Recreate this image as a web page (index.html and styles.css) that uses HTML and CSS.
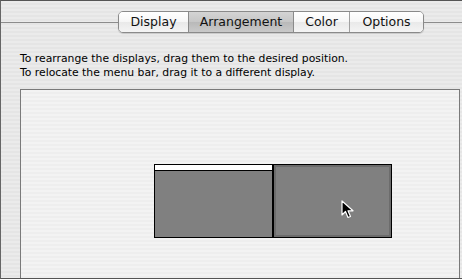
FILE: index.html
```html
<!DOCTYPE html>
<html lang="en">
<head>
  <meta charset="UTF-8">
  <meta name="viewport" content="width=device-width, initial-scale=1.0">
  <link rel="stylesheet" href="styles.css">
  <title>Displays</title>
</head>
<body>
  <div class="window">
    <div class="tabbar">
      <div class="tabs">
        <button class="tab">Display</button>
        <button class="tab active">Arrangement</button>
        <button class="tab">Color</button>
        <button class="tab">Options</button>
      </div>
    </div>

    <p class="hint">
      To rearrange the displays, drag them to the desired position.<br>
      To relocate the menu bar, drag it to a different display.
    </p>

    <div class="arrange">
      <div class="displays">
        <div class="screen main">
          <div class="menubar"></div>
        </div>
        <div class="screen selected">
          <svg class="cursor" width="13" height="19" viewBox="0 0 13 19">
            <path d="M1 1 L1 15 L4.5 11.5 L7 17.5 L9.5 16.5 L7 10.8 L12 10.8 Z" fill="#000" stroke="#fff" stroke-width="1.2" stroke-linejoin="round"/>
          </svg>
        </div>
      </div>
    </div>
  </div>
</body>
</html>
```

FILE: styles.css
```css
body {
  margin: 0;
  padding: 0;
  font-family: 'DejaVu Sans', 'Liberation Sans', sans-serif;
  color: #111;
  background: #e8e8e8;
}
.window {
  width: 462px;
  height: 279px;
  box-sizing: border-box;
  border-top: 1px solid #555;
  border-left: 1px solid #666;
  border-bottom: 1px solid #555;
  overflow: hidden;
  background: repeating-linear-gradient(to bottom, #ebebeb 0, #ebebeb 2px, #e5e5e5 2px, #e5e5e5 4px);
}
.tabbar {
  display: flex;
  align-items: center;
  margin-top: 10px;
}
.tabbar::before,
.tabbar::after {
  content: '';
  height: 1px;
  background: #8c8c8c;
}
.tabbar::before {
  width: 117px;
}
.tabbar::after {
  flex: 1;
}
.tabs {
  display: flex;
  height: 20px;
  border: 1px solid #8a8a8a;
  border-radius: 5px;
  overflow: hidden;
  box-shadow: 0 1px 1px rgba(0,0,0,0.15);
}
.tab {
  font-family: 'DejaVu Sans', sans-serif;
  font-size: 12.5px;
  color: #111;
  padding: 0;
  border: none;
  border-left: 1px solid #a0a0a0;
  background: linear-gradient(to bottom, #ffffff 0%, #f6f6f6 50%, #e9e9e9 51%, #f4f4f4 100%);
  line-height: 20px;
}
.tab:first-child {
  border-left: none;
}
.tab:nth-child(1) { width: 69px; }
.tab:nth-child(2) { width: 105px; }
.tab:nth-child(3) { width: 56px; }
.tab:nth-child(4) { width: 74px; }
.tab.active {
  background: linear-gradient(to bottom, #d4d4d4 0%, #c6c6c6 50%, #b9b9b9 51%, #c9c9c9 100%);
  border-left-color: #8a8a8a;
}
.tab.active + .tab {
  border-left-color: #8a8a8a;
}
.hint {
  margin: 19px 0 0 19px;
  font-size: 10.8px;
  line-height: 14px;
  color: #000;
}
.arrange {
  margin: 9px 0 0 19px;
  width: 438px;
  height: 200px;
  border: 1px solid #7a7a7a;
  background: repeating-linear-gradient(to bottom, #f3f3f3 0, #f3f3f3 2px, #eeeeee 2px, #eeeeee 4px);
}
.displays {
  display: flex;
  margin: 74px 0 0 133px;
}
.screen {
  position: relative;
  width: 117px;
  height: 72px;
  background: #808080;
  border: 1px solid #000;
}
.screen.main {
  border-right-width: 2px;
}
.menubar {
  height: 5px;
  background: #fff;
  border-bottom: 1px solid #000;
}
.screen.selected {
  border-width: 1px 1px 1px 0;
  box-shadow: inset 0 0 0 2px #6c6c6c;
}
.cursor {
  position: absolute;
  left: 67px;
  top: 35px;
}
```
